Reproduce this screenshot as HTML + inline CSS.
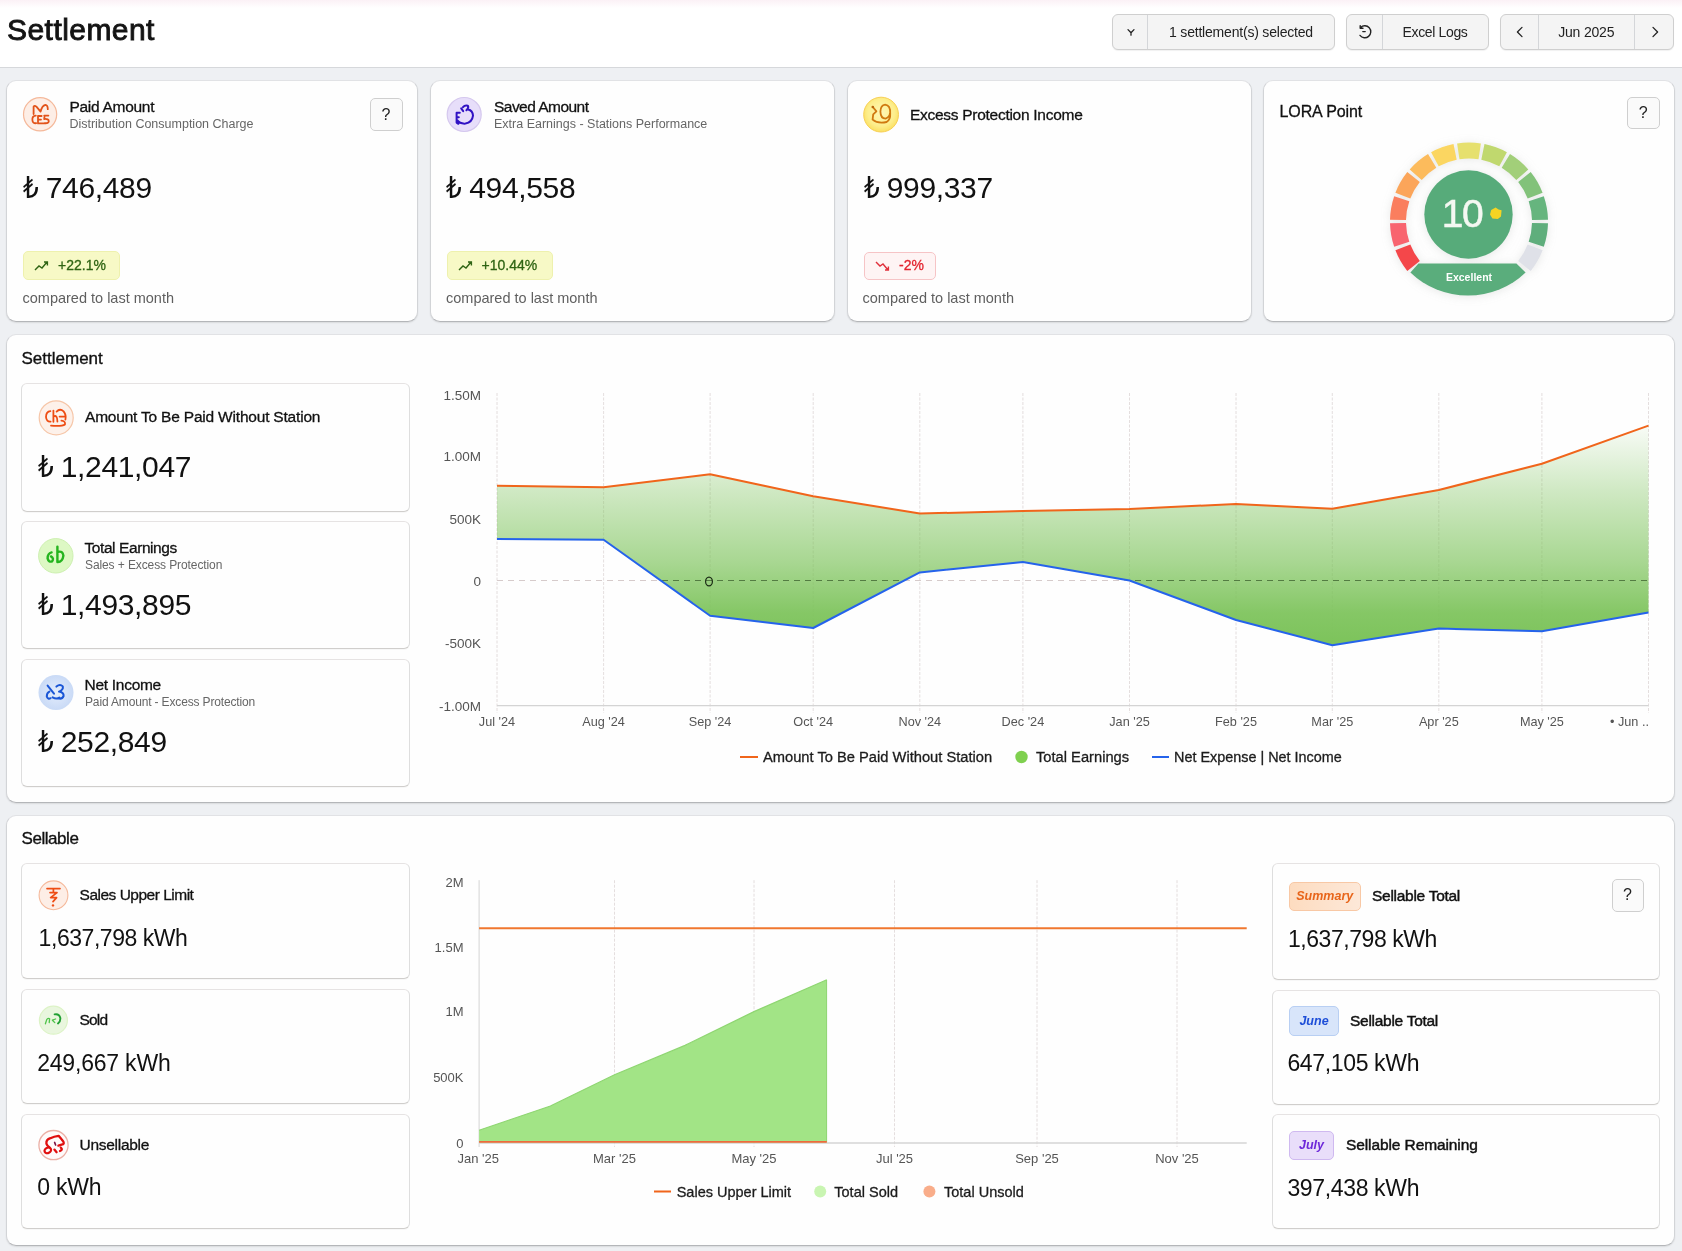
<!DOCTYPE html>
<html lang="en">
<head>
<meta charset="utf-8">
<title>Settlement</title>
<style>
*{box-sizing:border-box;margin:0;padding:0}
html,body{width:1682px;height:1251px;overflow:hidden}
body{position:relative;background:#eef0f3;font-family:"Liberation Sans","DejaVu Sans",sans-serif;color:#111;}
.abs{position:absolute}
.hdr{position:absolute;left:0;top:0;width:1682px;height:68px;background:#fff;border-bottom:1px solid #d6d8db}
.title{position:absolute;left:7px;top:12px;font-size:30px;line-height:36px;color:#141414;letter-spacing:.45px;-webkit-text-stroke:.9px #141414}
.btn{position:absolute;top:13.5px;height:36.5px;border:1px solid #cfcfcf;border-radius:6px;background:#f4f4f4;font-size:14px;color:#222;box-shadow:0 1px 1px rgba(0,0,0,.06)}
.btn .seg{position:absolute;top:0;bottom:0;display:flex;align-items:center;justify-content:center}
.btn .dv{position:absolute;top:0;bottom:0;width:1px;background:#d4d6d9}
.card{position:absolute;background:#fefefe;border:1px solid;border-color:#e1e2e5 #d2d4d7 #b4b6b9 #d2d4d7;border-radius:10px;box-shadow:0 1px 1.5px rgba(0,0,0,.09)}
.inner{position:absolute;background:#fefefe;border:1px solid;border-color:#e6e3e3 #dedede #d0cecc #dedede;border-radius:6px;box-shadow:0 1px 1px rgba(0,0,0,.03)}
.ico{position:absolute;border-radius:50%}
.t1{position:absolute;font-size:15.5px;letter-spacing:-.28px;line-height:18px;color:#111;white-space:nowrap;-webkit-text-stroke:.3px #111}
.t2{position:absolute;font-size:13px;line-height:16px;color:#666;white-space:nowrap}
.val{position:absolute;font-size:30px;letter-spacing:-.35px;line-height:34px;color:#111;white-space:nowrap}
.val2{position:absolute;font-size:24px;line-height:28px;color:#111;white-space:nowrap}
.badge{position:absolute;height:29px;border-radius:5px;font-size:14px;line-height:27px;white-space:nowrap}
.cmp{position:absolute;font-size:14.5px;line-height:20px;color:#5f5f5f;white-space:nowrap}
.q{position:absolute;width:33px;height:33px;border:1px solid #cfcfcf;border-radius:5px;background:#fafafa;font-size:16px;line-height:31px;text-align:center;color:#222}
.sect{position:absolute;font-size:17px;line-height:20px;color:#111;white-space:nowrap;-webkit-text-stroke:.35px #111}
svg text{font-family:"Liberation Sans","DejaVu Sans",sans-serif}

.badge{display:flex;align-items:center;padding-left:10px}
.badge span{margin-left:4px;-webkit-text-stroke:.3px currentColor}
.badge.up{background:#f7f9c6;border:1px solid #eef1ae;color:#2f6414}
.badge.dn{background:#fef4f4;border:1px solid #f6c4c6;color:#e3242f}
.val i,.val2 i{font-style:normal;display:inline-block;transform:scaleX(.82);transform-origin:0 50%;margin-right:-3.5px}
.val2{font-size:23px;line-height:30px}
.tag{position:absolute;border:1px solid;border-radius:5px;font-size:12.5px;font-weight:bold;font-style:italic;display:flex;align-items:center;justify-content:center;white-space:nowrap}
.t1.b{-webkit-text-stroke:.45px #111}
</style>
</head>
<body>
<div id="root" style="position:absolute;left:0;top:0;width:1682px;height:1251px;will-change:transform">
<!-- HEADER -->
<div class="hdr">
  <div class="abs" style="left:0;top:0;width:1682px;height:8px;background:linear-gradient(#fbf1f6,#fff)"></div>
  <div class="title">Settlement</div>
  <div class="btn" style="left:1112px;width:223px">
    <div class="dv" style="left:34px"></div>
    <svg class="abs" style="left:11px;top:10px" width="14" height="14" viewBox="0 0 14 14"><path d="M4 4.6L7 7.8L10 4.6M7 7.8V10.2" fill="none" stroke="#222" stroke-width="1.3" stroke-linecap="round" stroke-linejoin="round"/></svg>
    <div class="seg" style="left:35px;right:0;letter-spacing:-.2px">1 settlement(s) selected</div>
  </div>
  <div class="btn" style="left:1345.5px;width:143px">
    <div class="dv" style="left:35px"></div>
    <svg class="abs" style="left:9px;top:8px" width="18" height="18" viewBox="0 0 18 18"><path d="M4.6 4.4A6 6 0 1 1 4 12.4M4.2 2.6V5.2H7M6.8 8.6H9.2" fill="none" stroke="#222" stroke-width="1.4" stroke-linecap="round" stroke-linejoin="round"/></svg>
    <div class="seg" style="left:36px;right:0;letter-spacing:-.35px">Excel Logs</div>
  </div>
  <div class="btn" style="left:1499.5px;width:174.5px">
    <div class="dv" style="left:37px"></div>
    <div class="dv" style="left:133.5px"></div>
    <svg class="abs" style="left:12px;top:10px" width="14" height="14" viewBox="0 0 14 14"><path d="M9 2.4L4.4 7L9 11.6" fill="none" stroke="#222" stroke-width="1.3" stroke-linecap="round" stroke-linejoin="round"/></svg>
    <div class="seg" style="left:38px;width:95.5px;letter-spacing:-.2px">Jun 2025</div>
    <svg class="abs" style="left:147px;top:10px" width="14" height="14" viewBox="0 0 14 14"><path d="M5 2.4L9.6 7L5 11.6" fill="none" stroke="#222" stroke-width="1.3" stroke-linecap="round" stroke-linejoin="round"/></svg>
  </div>
</div>

<!-- ROW1 -->
<div class="card" style="left:6px;top:80px;width:412px;height:242px"></div>
<div class="card" style="left:430px;top:80px;width:405px;height:242px"></div>
<div class="card" style="left:847px;top:80px;width:405px;height:242px"></div>
<div class="card" style="left:1263px;top:80px;width:412px;height:242px"></div>

<!-- card 1 -->
<svg class="abs" style="left:20px;top:94px" width="42" height="42" viewBox="20 94 42 42">
  <circle cx="40.1" cy="114.3" r="16.6" fill="#fdeee6" stroke="#f5b99b" stroke-width="1.2"/>
  <path d="M33.6 114V106.6Q34.5 105 36.4 106.6L40.6 111.6Q42 105.6 45.4 104.8Q47.8 105 47.8 109.2" fill="none" stroke="#e2531a" stroke-width="1.8" stroke-linecap="round" stroke-linejoin="round"/>
  <path d="M35.8 115.6Q32 116 32.4 120Q32.6 123.6 36.2 123.2M38.2 116H41.6M38.2 119.6H41M38 116V123.4H45M44.2 115.6H48.4M44.6 115.6L44.2 119Q48.8 118.6 48.8 121.2Q48.6 123.6 44.6 123.2" fill="none" stroke="#e2531a" stroke-width="1.8" stroke-linecap="round" stroke-linejoin="round"/>
</svg>
<div class="t1" style="left:69.4px;top:96.5px;line-height:20px">Paid Amount</div>
<div class="t2" style="left:69.4px;top:113.9px;font-size:12.5px;line-height:20px">Distribution Consumption Charge</div>
<div class="q" style="left:369.5px;top:97.5px">?</div>
<div class="val" style="left:22.5px;top:171.2px"><i>₺</i> 746,489</div>
<div class="badge up" style="left:23px;top:251px;width:96.5px"><svg width="20" height="12" viewBox="0 0 20 12"><path d="M1 10L5 6L8 8L13 2M10 2H13.4V5.4" fill="none" stroke="#2f6414" stroke-width="1.4"/></svg><span>+22.1%</span></div>
<div class="cmp" style="left:22.5px;top:287.5px">compared to last month</div>

<!-- card 2 -->
<svg class="abs" style="left:444px;top:94px" width="42" height="42" viewBox="444 94 42 42">
  <circle cx="464.2" cy="114.5" r="17" fill="#e7defa" stroke="#d5c8ee" stroke-width="1.2"/>
  <path d="M456.6 112.8H459.8M456.6 117.2H458.8M456.6 112.8V122.6L458.4 123.8M457.2 120.2Q460 124 465.4 123.6Q472.2 122.4 473 115.6Q472.6 110.6 468.2 109.6M461.2 108.4L463.2 111.2M463 107.2Q464.8 104.8 467.8 105.6Q469.2 107.6 466.4 110.2" fill="none" stroke="#3012c4" stroke-width="2" stroke-linecap="round" stroke-linejoin="round"/>
</svg>
<div class="t1" style="left:494px;top:96.5px;line-height:20px;letter-spacing:-.53px">Saved Amount</div>
<div class="t2" style="left:494px;top:113.9px;font-size:12.5px;line-height:20px">Extra Earnings - Stations Performance</div>
<div class="val" style="left:446px;top:171.2px"><i>₺</i> 494,558</div>
<div class="badge up" style="left:446.5px;top:251px;width:106px"><svg width="20" height="12" viewBox="0 0 20 12"><path d="M1 10L5 6L8 8L13 2M10 2H13.4V5.4" fill="none" stroke="#2f6414" stroke-width="1.4"/></svg><span>+10.44%</span></div>
<div class="cmp" style="left:446px;top:287.5px">compared to last month</div>

<!-- card 3 -->
<svg class="abs" style="left:860px;top:94px" width="42" height="42" viewBox="860 94 42 42">
  <defs><radialGradient id="gy" cx="50%" cy="45%" r="55%"><stop offset="0" stop-color="#fef8b8"/><stop offset=".7" stop-color="#fdee8c"/><stop offset="1" stop-color="#fbe061"/></radialGradient></defs>
  <circle cx="881.1" cy="114.6" r="17.4" fill="url(#gy)" stroke="#f7cf55" stroke-width="1"/>
  <path d="M872.8 107L876.4 111.4L873.2 114.4L872.6 119.6Q878 124 886.6 122Q890.6 119.6 890.2 113.6Q890.6 105.2 885.2 104.6Q880.6 105 880.4 111.6Q880.6 118.4 885.6 118.6Q889.6 117.2 890 113" fill="none" stroke="#d07a10" stroke-width="1.8" stroke-linecap="round" stroke-linejoin="round"/>
<circle cx="872.8" cy="107" r="1.3" fill="#b8650c"/></svg>
<div class="t1" style="left:910px;top:104.8px;line-height:20px">Excess Protection Income</div>
<div class="val" style="left:863.5px;top:171.2px"><i>₺</i> 999,337</div>
<div class="badge dn" style="left:864px;top:251.5px;width:71.5px;height:28px"><svg width="20" height="12" viewBox="0 0 20 12"><path d="M1 2L5 6L8 4L13 10M10 10H13.4V6.6" fill="none" stroke="#e0303c" stroke-width="1.4"/></svg><span>-2%</span></div>
<div class="cmp" style="left:862.5px;top:287.5px">compared to last month</div>

<!-- card 4 -->
<div class="t1" style="left:1279.5px;top:102px;font-size:16px;letter-spacing:-.1px;line-height:20px">LORA Point</div>
<div class="q" style="left:1627px;top:96.5px;width:32.5px;height:32px;line-height:30px">?</div>
<svg class="abs" style="left:1380px;top:135px;filter:drop-shadow(0 1px 5px rgba(120,130,120,.18))" width="180" height="170" viewBox="1380 135 180 170">
<path d="M1407.3 270.9A79 79 0 0 1 1395.4 250.2L1410.3 244.4A63 63 0 0 0 1419.8 260.9Z" fill="#f4474a"/>
<path d="M1394.2 246.8A79 79 0 0 1 1390.0 223.3L1406.0 222.9A63 63 0 0 0 1409.3 241.7Z" fill="#f8646f"/>
<path d="M1390.0 219.7A79 79 0 0 1 1394.2 196.2L1409.3 201.3A63 63 0 0 0 1406.0 220.1Z" fill="#fa7e5e"/>
<path d="M1395.4 192.8A79 79 0 0 1 1407.3 172.1L1419.8 182.1A63 63 0 0 0 1410.3 198.6Z" fill="#fba55a"/>
<path d="M1409.7 169.4A79 79 0 0 1 1428.0 154.0L1436.3 167.7A63 63 0 0 0 1421.7 179.9Z" fill="#fcbb5c"/>
<path d="M1431.1 152.2A79 79 0 0 1 1453.5 144.0L1456.7 159.7A63 63 0 0 0 1438.7 166.2Z" fill="#fbd661"/>
<path d="M1457.1 143.4A79 79 0 0 1 1480.9 143.4L1478.5 159.2A63 63 0 0 0 1459.5 159.2Z" fill="#e6e06e"/>
<path d="M1484.5 144.0A79 79 0 0 1 1506.9 152.2L1499.3 166.2A63 63 0 0 0 1481.3 159.7Z" fill="#c0d86e"/>
<path d="M1510.0 154.0A79 79 0 0 1 1528.3 169.4L1516.3 179.9A63 63 0 0 0 1501.7 167.7Z" fill="#a2cf79"/>
<path d="M1530.7 172.1A79 79 0 0 1 1542.6 192.8L1527.7 198.6A63 63 0 0 0 1518.2 182.1Z" fill="#82c27a"/>
<path d="M1543.8 196.2A79 79 0 0 1 1548.0 219.7L1532.0 220.1A63 63 0 0 0 1528.7 201.3Z" fill="#66b57e"/>
<path d="M1548.0 223.3A79 79 0 0 1 1543.8 246.8L1528.7 241.7A63 63 0 0 0 1532.0 222.9Z" fill="#5fae7c"/>
<path d="M1542.6 250.2A79 79 0 0 1 1530.7 270.9L1518.2 260.9A63 63 0 0 0 1527.7 244.4Z" fill="#dfe1e8"/>
  <circle cx="1468.5" cy="214.5" r="44.2" fill="#57ab7a"/>
  <path d="M1418.5 263.5H1516.4L1525.6 272.6A79.7 73.9 0 0 1 1410.4 272.6Z" fill="#5aad7c"/>
  <text x="1462" y="227" font-size="39" fill="#f4f8f2" stroke="#f4f8f2" stroke-width=".5" text-anchor="middle" letter-spacing="-1.5">10</text>
  <path d="M1495.6 207.6L1498.6 209.4L1501.6 210.2L1501 216.6L1497.8 219L1492.4 218.6L1490 214.4L1491.2 210Z" fill="#f5d423"/>
  <text x="1469" y="281" font-size="10.5" font-weight="bold" fill="#fff" text-anchor="middle">Excellent</text>
</svg>

<!-- SECTION 2 -->
<div class="card" style="left:6px;top:334px;width:1669px;height:469px"></div>
<div class="sect" style="left:21.5px;top:348.8px">Settlement</div>
<div class="inner" style="left:21px;top:383px;width:389px;height:128.5px"></div>
<div class="inner" style="left:21px;top:521px;width:389px;height:128px"></div>
<div class="inner" style="left:21px;top:659px;width:389px;height:127.5px"></div>

<svg class="abs" style="left:36px;top:397px" width="42" height="42" viewBox="36 397 42 42">
  <circle cx="56.2" cy="417.8" r="17" fill="#fdf1ea" stroke="#f6c6a8" stroke-width="1.2"/>
  <path d="M50.4 411.2Q46 411.6 46 417Q46.4 422 50.6 421.6M53.4 410.6V421.8M53.6 416.4Q57.4 414.6 57.4 421.6M56.6 411.6Q60 408 63.6 411.4Q66.6 415.4 65.4 419.6M59.6 416.6H64.6M61.4 420.6Q65.6 421 65 424.4Q62 426.4 51 425.6" fill="none" stroke="#ee4d14" stroke-width="1.8" stroke-linecap="round" stroke-linejoin="round"/>
</svg>
<div class="t1" style="left:85px;top:407.4px;line-height:20px;letter-spacing:-.2px">Amount To Be Paid Without Station</div>
<div class="val" style="left:37.5px;top:449.8px"><i>₺</i> 1,241,047</div>

<svg class="abs" style="left:36px;top:535px" width="42" height="42" viewBox="36 535 42 42">
  <circle cx="55.8" cy="555.8" r="17.2" fill="#ddf8c4" stroke="#cdf0b0" stroke-width="1"/>
  <path d="M51.6 552.4Q47.6 553.4 47.6 558.4Q48.6 562.6 52 561.4Q54.4 558.4 51 556.4M57.4 546.6V562M57.6 552Q62.6 550.4 63.4 555.6Q62.6 561.8 57.8 562" fill="none" stroke="#25b41f" stroke-width="2.4" stroke-linecap="round" stroke-linejoin="round"/>
</svg>
<div class="t1" style="left:84.5px;top:537.8px;line-height:20px;letter-spacing:-.42px">Total Earnings</div>
<div class="t2" style="left:85px;top:554.6px;font-size:12px;letter-spacing:-.1px;line-height:20px">Sales + Excess Protection</div>
<div class="val" style="left:37.5px;top:587.7px"><i>₺</i> 1,493,895</div>

<svg class="abs" style="left:36px;top:672px" width="42" height="42" viewBox="36 672 42 42">
  <defs><radialGradient id="gb"><stop offset="0" stop-color="#e4edfc"/><stop offset="1" stop-color="#c9daf6"/></radialGradient></defs><circle cx="56" cy="692.5" r="17.5" fill="url(#gb)"/>
  <path d="M47.6 685.6L54 693.6M49.4 691.6Q46.6 693 46.8 696.6Q48 699.6 50.6 698.2M52.6 697.4Q56.4 699.6 59.4 697.6M56.4 686.6Q60 683.6 62.8 686.4Q63.6 689.6 59 691.6Q64 692.6 63.6 696Q62 699.6 58.4 698.4" fill="none" stroke="#1a56d6" stroke-width="2" stroke-linecap="round" stroke-linejoin="round"/>
</svg>
<div class="t1" style="left:84.5px;top:674.8px;line-height:20px">Net Income</div>
<div class="t2" style="left:85px;top:692px;font-size:12px;letter-spacing:-.15px;line-height:20px">Paid Amount - Excess Protection</div>
<div class="val" style="left:37.5px;top:724.7px"><i>₺</i> 252,849</div>

<svg class="abs" style="left:420px;top:380px" width="1250" height="400" viewBox="420 380 1250 400">
<defs><linearGradient id="ga" gradientUnits="userSpaceOnUse" x1="0" y1="425" x2="0" y2="646"><stop offset="0" stop-color="#7cc35a" stop-opacity=".04"/><stop offset=".3" stop-color="#7cc35a" stop-opacity=".36"/><stop offset=".62" stop-color="#7cc35a" stop-opacity=".66"/><stop offset=".85" stop-color="#7cc35a" stop-opacity=".93"/><stop offset="1" stop-color="#7cc35a" stop-opacity="1"/></linearGradient></defs>
<line x1="497.0" y1="393" x2="497.0" y2="713" stroke="#ddd6d6" stroke-width=".8" stroke-dasharray="3 1.5"/>
<line x1="603.6" y1="393" x2="603.6" y2="713" stroke="#ddd6d6" stroke-width=".8" stroke-dasharray="3 1.5"/>
<line x1="710.1" y1="393" x2="710.1" y2="713" stroke="#ddd6d6" stroke-width=".8" stroke-dasharray="3 1.5"/>
<line x1="813.2" y1="393" x2="813.2" y2="713" stroke="#ddd6d6" stroke-width=".8" stroke-dasharray="3 1.5"/>
<line x1="919.8" y1="393" x2="919.8" y2="713" stroke="#ddd6d6" stroke-width=".8" stroke-dasharray="3 1.5"/>
<line x1="1022.9" y1="393" x2="1022.9" y2="713" stroke="#ddd6d6" stroke-width=".8" stroke-dasharray="3 1.5"/>
<line x1="1129.5" y1="393" x2="1129.5" y2="713" stroke="#ddd6d6" stroke-width=".8" stroke-dasharray="3 1.5"/>
<line x1="1236.0" y1="393" x2="1236.0" y2="713" stroke="#ddd6d6" stroke-width=".8" stroke-dasharray="3 1.5"/>
<line x1="1332.3" y1="393" x2="1332.3" y2="713" stroke="#ddd6d6" stroke-width=".8" stroke-dasharray="3 1.5"/>
<line x1="1438.8" y1="393" x2="1438.8" y2="713" stroke="#ddd6d6" stroke-width=".8" stroke-dasharray="3 1.5"/>
<line x1="1541.9" y1="393" x2="1541.9" y2="713" stroke="#ddd6d6" stroke-width=".8" stroke-dasharray="3 1.5"/>
<line x1="1648.5" y1="393" x2="1648.5" y2="713" stroke="#ddd6d6" stroke-width=".8" stroke-dasharray="3 1.5"/>
<line x1="497.0" y1="705.6" x2="1648.5" y2="705.6" stroke="#d4d4d4" stroke-width="1.4"/>
<path d="M497.0 485.7 L603.6 487.2 L710.1 474.3 L813.2 496.3 L919.8 513.6 L1022.9 510.9 L1129.5 509.0 L1236.0 504.0 L1332.3 508.8 L1438.8 490.0 L1541.9 463.8 L1648.5 425.6 L1648.5 612.5 L1541.9 631.2 L1438.8 628.5 L1332.3 645.2 L1236.0 620.0 L1129.5 580.5 L1022.9 562.0 L919.8 572.4 L813.2 628.0 L710.1 615.8 L603.6 539.7 L497.0 539.0Z" fill="url(#ga)"/>
<clipPath id="cpa"><path d="M497.0 485.7 L603.6 487.2 L710.1 474.3 L813.2 496.3 L919.8 513.6 L1022.9 510.9 L1129.5 509.0 L1236.0 504.0 L1332.3 508.8 L1438.8 490.0 L1541.9 463.8 L1648.5 425.6 L1648.5 612.5 L1541.9 631.2 L1438.8 628.5 L1332.3 645.2 L1236.0 620.0 L1129.5 580.5 L1022.9 562.0 L919.8 572.4 L813.2 628.0 L710.1 615.8 L603.6 539.7 L497.0 539.0Z"/></clipPath><line x1="497.0" y1="580.5" x2="1648.5" y2="580.5" stroke="#d6cbcb" stroke-width="1" stroke-dasharray="6 5"/><line x1="497.0" y1="580.5" x2="1648.5" y2="580.5" stroke="#3c6e2a" stroke-opacity=".85" stroke-width="1.1" stroke-dasharray="6 5" clip-path="url(#cpa)"/>
<polyline points="497.0,485.7 603.6,487.2 710.1,474.3 813.2,496.3 919.8,513.6 1022.9,510.9 1129.5,509.0 1236.0,504.0 1332.3,508.8 1438.8,490.0 1541.9,463.8 1648.5,425.6" fill="none" stroke="#f0651b" stroke-width="2" stroke-linejoin="round"/>
<polyline points="497.0,539.0 603.6,539.7 710.1,615.8 813.2,628.0 919.8,572.4 1022.9,562.0 1129.5,580.5 1236.0,620.0 1332.3,645.2 1438.8,628.5 1541.9,631.2 1648.5,612.5" fill="none" stroke="#2563eb" stroke-width="2" stroke-linejoin="round"/>
<ellipse cx="709" cy="581.5" rx="3.4" ry="4.4" fill="none" stroke="#1a2a14" stroke-width="1.2"/>
<text x="481" y="399.9" font-size="13.5" fill="#555" text-anchor="end">1.50M</text>
<text x="481" y="461.4" font-size="13.5" fill="#555" text-anchor="end">1.00M</text>
<text x="481" y="523.6" font-size="13.5" fill="#555" text-anchor="end">500K</text>
<text x="481" y="585.6" font-size="13.5" fill="#555" text-anchor="end">0</text>
<text x="481" y="647.6" font-size="13.5" fill="#555" text-anchor="end">-500K</text>
<text x="481" y="710.6" font-size="13.5" fill="#555" text-anchor="end">-1.00M</text>
<text x="497.0" y="725.6" font-size="12.7" fill="#555" text-anchor="middle">Jul '24</text>
<text x="603.6" y="725.6" font-size="12.7" fill="#555" text-anchor="middle">Aug '24</text>
<text x="710.1" y="725.6" font-size="12.7" fill="#555" text-anchor="middle">Sep '24</text>
<text x="813.2" y="725.6" font-size="12.7" fill="#555" text-anchor="middle">Oct '24</text>
<text x="919.8" y="725.6" font-size="12.7" fill="#555" text-anchor="middle">Nov '24</text>
<text x="1022.9" y="725.6" font-size="12.7" fill="#555" text-anchor="middle">Dec '24</text>
<text x="1129.5" y="725.6" font-size="12.7" fill="#555" text-anchor="middle">Jan '25</text>
<text x="1236.0" y="725.6" font-size="12.7" fill="#555" text-anchor="middle">Feb '25</text>
<text x="1332.3" y="725.6" font-size="12.7" fill="#555" text-anchor="middle">Mar '25</text>
<text x="1438.8" y="725.6" font-size="12.7" fill="#555" text-anchor="middle">Apr '25</text>
<text x="1541.9" y="725.6" font-size="12.7" fill="#555" text-anchor="middle">May '25</text>
<text x="1649.0" y="725.6" font-size="12.7" fill="#555" text-anchor="end">• Jun ..</text>
<line x1="740" y1="757" x2="758" y2="757" stroke="#f0651b" stroke-width="2"/>
<text x="763" y="762" font-size="14.7" fill="#1c1c1c" stroke="#1c1c1c" stroke-width=".3">Amount To Be Paid Without Station</text>
<circle cx="1021.5" cy="757" r="6.2" fill="#7fd04f"/>
<text x="1036" y="762" font-size="14.7" fill="#1c1c1c" stroke="#1c1c1c" stroke-width=".3">Total Earnings</text>
<line x1="1152" y1="757" x2="1169" y2="757" stroke="#2563eb" stroke-width="2"/>
<text x="1174" y="762" font-size="14.4" fill="#1c1c1c" stroke="#1c1c1c" stroke-width=".3">Net Expense | Net Income</text>
</svg>

<!-- SECTION 3 -->
<div class="card" style="left:6px;top:815px;width:1669px;height:431px"></div>
<div class="sect" style="left:21.5px;top:828.9px;letter-spacing:-.45px">Sellable</div>
<div class="inner" style="left:21px;top:863px;width:389px;height:115.5px"></div>
<div class="inner" style="left:21px;top:989px;width:389px;height:115px"></div>
<div class="inner" style="left:21px;top:1114px;width:389px;height:114.5px"></div>
<div class="inner" style="left:1271.5px;top:863px;width:388px;height:116.5px"></div>
<div class="inner" style="left:1271.5px;top:989.5px;width:388px;height:115px"></div>
<div class="inner" style="left:1271.5px;top:1114px;width:388px;height:114.5px"></div>

<svg class="abs" style="left:36px;top:878px" width="36" height="36" viewBox="36 878 36 36">
  <circle cx="53.5" cy="895.3" r="14.4" fill="#fdeee6" stroke="#f5b99b" stroke-width="1.1"/>
  <path d="M47 888.6H60M53.4 888.6V892M50 892.6H57L50.6 897.6H56.6L53 901.6" fill="none" stroke="#ee4d14" stroke-width="1.7" stroke-linecap="round" stroke-linejoin="round"/>
  <circle cx="53" cy="905.4" r="1.2" fill="#ee4d14"/>
</svg>
<div class="t1" style="left:79.6px;top:885.1px;line-height:20px;letter-spacing:-.5px">Sales Upper Limit</div>
<div class="val2" style="left:38.6px;top:922.5px;letter-spacing:-.45px">1,637,798 kWh</div>

<svg class="abs" style="left:36px;top:1002px" width="36" height="36" viewBox="36 1002 36 36">
  <circle cx="53.4" cy="1020.2" r="14" fill="#e9f6de" stroke="#dcf3c6" stroke-width="1.2"/>
  <path d="M45.4 1023.8L46.8 1019.4Q48.4 1017.8 49.6 1018.8L49.2 1022.6M55.6 1019L52.4 1020.2L54.8 1022.6" fill="none" stroke="#4fc44a" stroke-width="1.3" stroke-linecap="round" stroke-linejoin="round"/><path d="M54.6 1014.4Q59.6 1013.6 60.4 1018.4Q60.4 1021.6 58 1023.4" fill="none" stroke="#22a034" stroke-width="1.9" stroke-linecap="round"/>
</svg>
<div class="t1" style="left:79.5px;top:1009.7px;line-height:20px;letter-spacing:-.8px">Sold</div>
<div class="val2" style="left:37.2px;top:1047.6px;letter-spacing:-.2px">249,667 kWh</div>

<svg class="abs" style="left:36px;top:1127px" width="36" height="36" viewBox="36 1127 36 36">
  <circle cx="53.5" cy="1145.1" r="14.6" fill="#fffafa" stroke="#ebb0a6" stroke-width="1.3"/>
  <path d="M46.4 1143.6Q46 1139.6 50.4 1138.2Q54 1136.4 58.6 1135.8L61.8 1139.6Q64.8 1142.6 63.2 1144.2L58.4 1145.6M46.4 1143.6Q47 1145.8 49.6 1147.4M60.8 1147.6Q63.2 1149.6 60 1151M54.4 1149.6L56.6 1152.2" fill="none" stroke="#e00f0f" stroke-width="2.3" stroke-linecap="round" stroke-linejoin="round"/><ellipse cx="47.8" cy="1150.4" rx="3.4" ry="2.7" transform="rotate(-25 47.8 1150.4)" fill="none" stroke="#e00f0f" stroke-width="2.2"/><path d="M54.6 1142.4L55.6 1145" stroke="#7a1040" stroke-width="1.6" stroke-linecap="round"/>
</svg>
<div class="t1" style="left:79.5px;top:1134.6px;line-height:20px">Unsellable</div>
<div class="val2" style="left:37.2px;top:1171.6px;letter-spacing:-.2px">0 kWh</div>

<svg class="abs" style="left:420px;top:865px" width="840" height="350" viewBox="420 865 840 350">
<line x1="479.1" y1="880.2" x2="479.1" y2="1147" stroke="#d4d4d4" stroke-width="1"/>
<line x1="614.5" y1="880.2" x2="614.5" y2="1147" stroke="#ddd6d6" stroke-width=".8" stroke-dasharray="3 1.5"/>
<line x1="754" y1="880.2" x2="754" y2="1147" stroke="#ddd6d6" stroke-width=".8" stroke-dasharray="3 1.5"/>
<line x1="894.5" y1="880.2" x2="894.5" y2="1147" stroke="#ddd6d6" stroke-width=".8" stroke-dasharray="3 1.5"/>
<line x1="1037" y1="880.2" x2="1037" y2="1147" stroke="#ddd6d6" stroke-width=".8" stroke-dasharray="3 1.5"/>
<line x1="1177" y1="880.2" x2="1177" y2="1147" stroke="#ddd6d6" stroke-width=".8" stroke-dasharray="3 1.5"/>
<line x1="479.1" y1="1143" x2="1246.7" y2="1143" stroke="#d4d4d4" stroke-width="1.4"/>
<path d="M479.1 1142.6 L479.1 1130.3 L550.4 1106 L614.5 1074.8 L685 1045.4 L754 1011.6 L826.8 979.8 L826.8 1142.6Z" fill="#a2e486"/>
<polyline points="479.1,1130.3 550.4,1106 614.5,1074.8 685,1045.4 754,1011.6 826.8,979.8" fill="none" stroke="#8fd672" stroke-width="1.2"/>
<line x1="826.6" y1="980" x2="826.6" y2="1142" stroke="#8fd672" stroke-width="1"/>
<line x1="479.1" y1="1141.8" x2="826.8" y2="1141.8" stroke="#ee6a3c" stroke-width="1.8"/>
<line x1="479.1" y1="928.3" x2="1246.7" y2="928.3" stroke="#f0772f" stroke-width="2"/>
<text x="463.5" y="887.3" font-size="13" fill="#555" text-anchor="end">2M</text>
<text x="463.5" y="952.0" font-size="13" fill="#555" text-anchor="end">1.5M</text>
<text x="463.5" y="1016.2" font-size="13" fill="#555" text-anchor="end">1M</text>
<text x="463.5" y="1082.4" font-size="13" fill="#555" text-anchor="end">500K</text>
<text x="463.5" y="1147.6" font-size="13" fill="#555" text-anchor="end">0</text>
<text x="478.2" y="1162.7" font-size="13" fill="#555" text-anchor="middle">Jan '25</text>
<text x="614.5" y="1162.7" font-size="13" fill="#555" text-anchor="middle">Mar '25</text>
<text x="754" y="1162.7" font-size="13" fill="#555" text-anchor="middle">May '25</text>
<text x="894.5" y="1162.7" font-size="13" fill="#555" text-anchor="middle">Jul '25</text>
<text x="1037" y="1162.7" font-size="13" fill="#555" text-anchor="middle">Sep '25</text>
<text x="1177" y="1162.7" font-size="13" fill="#555" text-anchor="middle">Nov '25</text>
<line x1="654" y1="1191.5" x2="671" y2="1191.5" stroke="#f0651b" stroke-width="2"/>
<text x="676.7" y="1196.5" font-size="14.5" fill="#1c1c1c" stroke="#1c1c1c" stroke-width=".3">Sales Upper Limit</text>
<circle cx="820.2" cy="1191.5" r="6" fill="#c9f5b2"/>
<text x="834.3" y="1196.5" font-size="14.5" fill="#1c1c1c" stroke="#1c1c1c" stroke-width=".3">Total Sold</text>
<circle cx="929.4" cy="1191.5" r="6" fill="#f9ad8a"/>
<text x="944" y="1196.5" font-size="14.5" fill="#1c1c1c" stroke="#1c1c1c" stroke-width=".3">Total Unsold</text>
</svg>

<div class="tag" style="left:1289px;top:881.5px;width:71.5px;height:29.5px;background:linear-gradient(90deg,#fddcc0,#fde8d8);border-color:#f8c8a5;color:#e8651a">Summary</div>
<div class="t1 b" style="left:1372px;top:885.6px;line-height:20px">Sellable Total</div>
<div class="q" style="left:1611.5px;top:879.3px;width:32px;height:32.4px;line-height:30px">?</div>
<div class="val2" style="left:1288px;top:923.8px;letter-spacing:-.45px">1,637,798 kWh</div>

<div class="tag" style="left:1289px;top:1006.2px;width:50px;height:29.5px;background:#d8e5fa;border-color:#b8cff3;color:#1d4ed8">June</div>
<div class="t1 b" style="left:1350px;top:1010.5px;line-height:20px">Sellable Total</div>
<div class="val2" style="left:1287.4px;top:1047.8px;letter-spacing:-.35px">647,105 kWh</div>

<div class="tag" style="left:1289px;top:1130.5px;width:45px;height:29.5px;background:#e9defa;border-color:#cfb9f0;color:#6d28d9">July</div>
<div class="t1 b" style="left:1346px;top:1135.3px;line-height:20px;letter-spacing:-.1px">Sellable Remaining</div>
<div class="val2" style="left:1287.4px;top:1172.5px;letter-spacing:-.35px">397,438 kWh</div>

</div>
</body>
</html>
